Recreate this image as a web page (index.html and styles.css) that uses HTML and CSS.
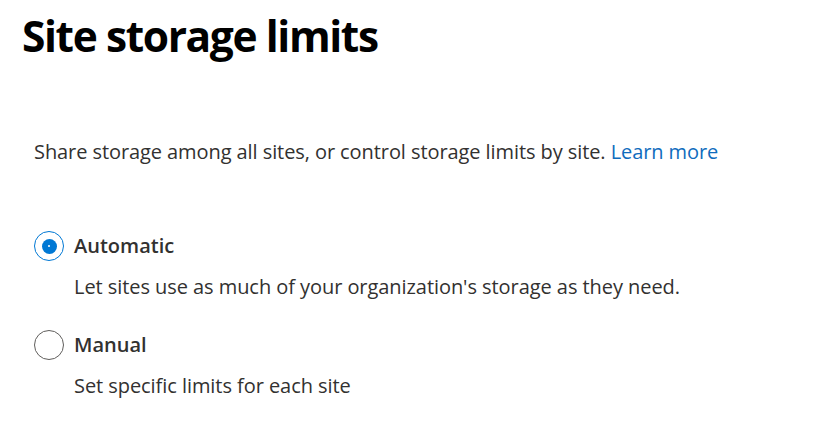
FILE: index.html
```html
<!DOCTYPE html>
<html lang="en">
<head>
<meta charset="utf-8">
<title>Site storage limits</title>
<link rel="stylesheet" href="styles.css">
</head>
<body>
<main class="page">
  <h1 class="title">Site storage limits</h1>
  <p class="intro">Share storage among all sites, or control storage limits by site. <a class="link" href="#">Learn more</a></p>
  <div class="options" role="radiogroup">
    <div class="option">
      <div class="option-head">
        <span class="radio radio-checked"><span class="radio-dot"></span></span>
        <span class="option-label">Automatic</span>
      </div>
      <div class="option-desc">Let sites use as much of your organization's storage as they need.</div>
    </div>
    <div class="option">
      <div class="option-head">
        <span class="radio"></span>
        <span class="option-label">Manual</span>
      </div>
      <div class="option-desc">Set specific limits for each site</div>
    </div>
  </div>
</main>
</body>
</html>
```
FILE: styles.css
```css
html, body {
  margin: 0;
  padding: 0;
  background: #ffffff;
}
body {
  font-family: "Open Sans", "Noto Sans", sans-serif;
  color: #323130;
}
.page {
  display: flex;
  flex-direction: column;
  padding: 6px 0 0 22px;
}
.title {
  margin: 0;
  font-size: 42.5px;
  font-weight: 700;
  line-height: 60px;
  color: #000000;
  letter-spacing: -1.4px;
}
.intro {
  margin: 71px 0 0 12px;
  font-size: 20px;
  line-height: 30px;
  letter-spacing: -0.08px;
}
.link {
  color: #0f6cbd;
  text-decoration: none;
}
.options {
  display: flex;
  flex-direction: column;
  gap: 28px;
  margin: 64px 0 0 12px;
}
.option {
  display: flex;
  flex-direction: column;
  gap: 11px;
}
.option-head {
  display: flex;
  align-items: center;
  gap: 10px;
}
.radio {
  box-sizing: border-box;
  width: 30px;
  height: 30px;
  border-radius: 50%;
  border: 1.5px solid #605e5c;
  display: flex;
  align-items: center;
  justify-content: center;
}
.radio-checked {
  border-color: #0078d4;
}
.radio-dot {
  width: 15px;
  height: 15px;
  border-radius: 50%;
  background: #0078d4;
  position: relative;
}
.radio-dot::after {
  content: "";
  position: absolute;
  left: 6.5px;
  top: 6.5px;
  width: 2px;
  height: 2px;
  border-radius: 50%;
  background: #ffffff;
}
.option-label {
  font-size: 20px;
  font-weight: 600;
  line-height: 30px;
}
.option-desc {
  padding-left: 40px;
  font-size: 20px;
  line-height: 30px;
  letter-spacing: -0.06px;
}
```
